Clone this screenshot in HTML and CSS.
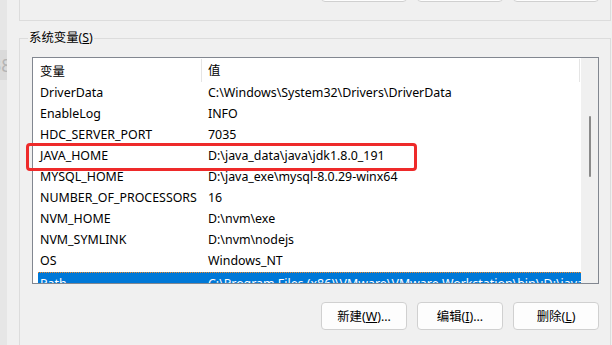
FILE: index.html
```html
<!DOCTYPE html>
<html lang="zh-CN">

<head>
    <meta charset="UTF-8">
    <meta name="viewport" content="width=device-width, initial-scale=1.0">
    <title>系统变量</title>
    <link rel="stylesheet" href="styles.css">
</head>

<body>

    <div class="screen">
        <div class="side">
            <div class="ghost">38</div>
        </div>

        <div class="window">
            <!-- 上方的用户变量区 (只露出按钮底边) -->
            <div class="group-top">
                <div class="btn-row top-btns">
                    <div class="btn"></div>
                    <div class="btn"></div>
                    <div class="btn"></div>
                </div>
            </div>

            <!-- 系统变量 -->
            <div class="group">
                <span class="group-label">系统变量(<u>S</u>)</span>

                <div class="list-wrap">
                    <div class="list">
                        <div class="list-body">
                            <div class="header">
                                <div class="col-name">变量</div>
                                <div class="col-value">值</div>
                                <div class="header-end"></div>
                            </div>
                            <div class="row"><div class="col-name">DriverData</div><div class="col-value">C:\Windows\System32\Drivers\DriverData</div></div>
                            <div class="row"><div class="col-name">EnableLog</div><div class="col-value">INFO</div></div>
                            <div class="row"><div class="col-name">HDC_SERVER_PORT</div><div class="col-value">7035</div></div>
                            <div class="row"><div class="col-name">JAVA_HOME</div><div class="col-value">D:\java_data\java\jdk1.8.0_191</div></div>
                            <div class="row"><div class="col-name">MYSQL_HOME</div><div class="col-value">D:\java_exe\mysql-8.0.29-winx64</div></div>
                            <div class="row"><div class="col-name">NUMBER_OF_PROCESSORS</div><div class="col-value">16</div></div>
                            <div class="row"><div class="col-name">NVM_HOME</div><div class="col-value">D:\nvm\exe</div></div>
                            <div class="row"><div class="col-name">NVM_SYMLINK</div><div class="col-value">D:\nvm\nodejs</div></div>
                            <div class="row"><div class="col-name">OS</div><div class="col-value">Windows_NT</div></div>
                            <div class="row selected"><div class="col-name">Path</div><div class="col-value">C:\Program Files (x86)\VMware\VMware Workstation\bin\;D:\java_exe</div></div>
                        </div>
                        <div class="scrollbar">
                            <div class="thumb"></div>
                        </div>
                    </div>

                    <!-- 红框标注 -->
                    <div class="mark"></div>
                </div>

                <div class="btn-row">
                    <div class="btn">新建(<u>W</u>)...</div>
                    <div class="btn">编辑(<u>I</u>)...</div>
                    <div class="btn">删除(<u>L</u>)</div>
                </div>
            </div>
        </div>
    </div>

</body>

</html>
```

FILE: styles.css
```css
* {
    box-sizing: border-box;
    padding: 0;
    margin: 0;
}

body {
    background: #f0f0f0;
    font-family: 'Noto Sans', 'Noto Sans CJK SC', sans-serif;
    font-size: 12.4px;
    color: #000;
    overflow: hidden;
}

.screen {
    display: flex;
    width: 612px;
    height: 345px;
    overflow: hidden;
}

.side {
    width: 7px;
    flex-shrink: 0;
    background: #e6e6e6;
    overflow: hidden;
    padding-top: 50px;
}

.ghost {
    height: 30px;
    background: #dadada;
    color: #b4b4b4;
    font-size: 18px;
    line-height: 30px;
    margin-left: -9px;
}

.window {
    flex: 1;
    padding-left: 12px;
}

/* 上方分组框 */
.group-top {
    display: flex;
    flex-direction: column;
    height: 21px;
    width: 592px;
    border-left: 1px solid #dcdcdc;
    border-right: 1px solid #dcdcdc;
    border-bottom: 1px solid #dcdcdc;
}

/* 系统变量分组框 */
.group {
    position: relative;
    width: 592px;
    height: 320px;
    margin-top: 17px;
    border: 1px solid #dcdcdc;
    border-bottom: none;
    padding: 18px 11px 0 12px;
}

.group-label {
    position: absolute;
    top: -10px;
    left: 8px;
    padding: 0 1px;
    background: #f0f0f0;
    line-height: 18px;
}

.list-wrap {
    position: relative;
}

.list {
    display: flex;
    height: 227px;
    border: 1px solid #828790;
    background: #fff;
}

.list-body {
    flex: 1;
    overflow: hidden;
}

.header {
    display: flex;
    height: 24px;
    align-items: center;
    position: relative;
}

.header .col-name {
    border-right: 1px solid #e5e5e5;
    height: 23px;
    margin-top: 1px;
    display: flex;
    align-items: center;
}

.header-end {
    position: absolute;
    left: 546px;
    top: 1px;
    width: 1px;
    height: 23px;
    background: #e5e5e5;
}

.row {
    display: flex;
    height: 21px;
    align-items: center;
    white-space: nowrap;
}

.col-name {
    width: 169px;
    flex-shrink: 0;
    padding-left: 7px;
}

.col-value {
    padding-left: 6px;
}

.row.selected {
    margin: 1px 0 0 5px;
    padding-top: 1px;
    background: #0078d7;
    color: #fff;
    border-top: 1px dotted #f08a2a;
    overflow: hidden;
}

.row.selected .col-name {
    width: 164px;
    padding-left: 2px;
}

.scrollbar {
    width: 17px;
    flex-shrink: 0;
    background: #f0f0f0;
    padding-top: 58px;
}

.thumb {
    width: 2px;
    height: 61px;
    margin-left: 8px;
    border-radius: 1px;
    background: #8a8a8a;
}

.mark {
    position: absolute;
    left: -6px;
    top: 86px;
    width: 391px;
    height: 28px;
    border: 3px solid #ee2a2a;
    border-radius: 4px;
}

/* 按钮 */
.btn-row {
    display: flex;
    justify-content: flex-end;
    gap: 10px;
    margin-top: 18px;
}

.btn-row.top-btns {
    margin-top: -26px;
    padding-right: 11px;
}

.btn {
    width: 86px;
    height: 28px;
    background: #fdfdfd;
    border: 1px solid #d0d0d0;
    border-radius: 4px;
    display: flex;
    align-items: center;
    justify-content: center;
}
```
